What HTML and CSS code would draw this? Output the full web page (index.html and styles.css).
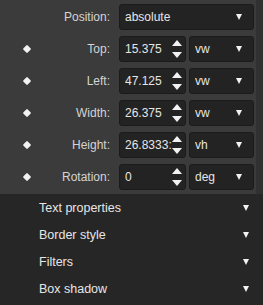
FILE: index.html
```html
<!DOCTYPE html>
<html lang="en">
  <head>
    <meta charset="UTF-8" />
    <title>Layout properties</title>
    <link rel="stylesheet" href="styles.css">
  </head>
  <body>
    <div class="props">
      <div class="panel">
        <div class="row">
          <div class="label"><span class="name">Position:</span></div>
          <div class="select wide"><span>absolute</span><i class="caret"></i></div>
        </div>
        <div class="row">
          <div class="label"><b class="dot"></b><span class="name">Top:</span></div>
          <div class="num"><span>15.375</span><i class="spin"></i></div>
          <div class="select unit"><span>vw</span><i class="caret"></i></div>
        </div>
        <div class="row">
          <div class="label"><b class="dot"></b><span class="name">Left:</span></div>
          <div class="num"><span>47.125</span><i class="spin"></i></div>
          <div class="select unit"><span>vw</span><i class="caret"></i></div>
        </div>
        <div class="row">
          <div class="label"><b class="dot"></b><span class="name">Width:</span></div>
          <div class="num"><span>26.375</span><i class="spin"></i></div>
          <div class="select unit"><span>vw</span><i class="caret"></i></div>
        </div>
        <div class="row">
          <div class="label"><b class="dot"></b><span class="name">Height:</span></div>
          <div class="num"><span>26.8333:</span><i class="spin"></i></div>
          <div class="select unit"><span>vh</span><i class="caret"></i></div>
        </div>
        <div class="row">
          <div class="label"><b class="dot"></b><span class="name">Rotation:</span></div>
          <div class="num"><span>0</span><i class="spin"></i></div>
          <div class="select unit"><span>deg</span><i class="caret"></i></div>
        </div>
      </div>
    </div>
    <div class="section"><span>Text properties</span><i class="caret"></i></div>
    <div class="section"><span>Border style</span><i class="caret"></i></div>
    <div class="section"><span>Filters</span><i class="caret"></i></div>
    <div class="section"><span>Box shadow</span><i class="caret"></i></div>
  </body>
</html>
```

FILE: styles.css
```css
* {
  margin: 0;
  padding: 0;
  box-sizing: border-box;
}
body {
  background: #262626;
  font-family: "Liberation Sans", Arial, sans-serif;
  font-size: 12px;
  color: #e6e6e6;
}
.props {
  background: #313131;
}
.panel {
  width: 256px;
  background: #3b3b3b;
  padding: 4px 0 4px;
}
.row {
  display: flex;
  align-items: center;
  height: 26px;
  margin-bottom: 6px;
}
.row:last-child {
  margin-bottom: 0;
}
.label {
  width: 119px;
  display: flex;
  align-items: center;
  padding-right: 9px;
  color: #d4d4d4;
}
.name {
  margin-left: auto;
}
.dot {
  width: 6px;
  height: 6px;
  margin-left: 24px;
  background: #f2f2f2;
  transform: rotate(45deg);
  border-radius: 1px;
}
.select,
.num {
  height: 26px;
  display: flex;
  align-items: center;
  background: #232323;
  border: 1px solid #1b1b1b;
  border-radius: 3px;
  padding-left: 5px;
}
.wide {
  width: 135px;
  padding-right: 11px;
}
.num {
  width: 67px;
  padding-right: 2px;
}
.unit {
  width: 65px;
  margin-left: 3px;
  padding-right: 11px;
}
.select span,
.num span {
  flex: 1;
  overflow: hidden;
  white-space: nowrap;
}
.caret {
  width: 0;
  height: 0;
  border-left: 3.5px solid transparent;
  border-right: 3.5px solid transparent;
  border-top: 6px solid #f2f2f2;
}
.spin {
  position: relative;
  width: 10px;
  height: 18px;
  margin-right: 1px;
}
.spin::before,
.spin::after {
  content: "";
  position: absolute;
  left: 0;
  border-left: 5px solid transparent;
  border-right: 5px solid transparent;
}
.spin::before {
  top: 0;
  border-bottom: 6px solid #f2f2f2;
}
.spin::after {
  bottom: 0;
  border-top: 6px solid #f2f2f2;
}
.section {
  height: 27px;
  display: flex;
  align-items: center;
  padding-left: 39px;
  padding-right: 14px;
  font-size: 12.5px;
}
.section span {
  flex: 1;
}
```
